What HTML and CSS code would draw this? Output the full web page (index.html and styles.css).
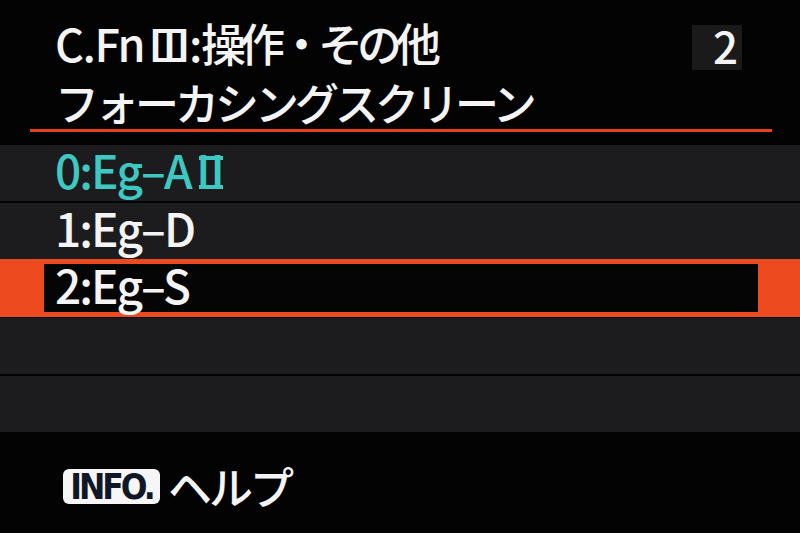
FILE: index.html
```html
<!DOCTYPE html>
<html lang="ja">
<head>
<meta charset="utf-8">
<link rel="stylesheet" href="styles.css">
</head>
<body>
<div class="screen">
  <header class="head">
    <div class="head-top">
      <h1 class="title"><span class="lat">C.Fn</span><span class="roman r3">Ⅲ</span><span class="lat colon">:</span>操作・その他</h1>
      <span class="page">2</span>
    </div>
    <div class="subtitle">フォーカシングスクリーン</div>
  </header>
  <div class="rule"></div>
  <ul class="list">
    <li class="row current"><span class="label">0:Eg–A<span class="roman r2">Ⅱ</span></span></li>
    <li class="row"><span class="label">1:Eg–D</span></li>
    <li class="row selected"><div class="sel-inner"><span class="label">2:Eg–S</span></div></li>
    <li class="row"></li>
    <li class="row"></li>
  </ul>
  <footer class="foot">
    <span class="badge">INFO.</span>
    <span class="help">ヘルプ</span>
  </footer>
</div>
</body>
</html>
```

FILE: styles.css
```css
* { box-sizing: border-box; }
html, body {
  margin: 0;
  padding: 0;
  background: #030303;
}
.screen {
  width: 800px;
  height: 533px;
  overflow: hidden;
  background: #030303;
  color: #f4f4f4;
  font-family: "Noto Sans CJK JP", "Noto Sans", sans-serif;
}
.head {
  padding: 16px 58px 0 55px;
}
.head-top {
  display: flex;
  justify-content: space-between;
  align-items: flex-start;
  height: 54px;
}
.title {
  margin: 0;
  font-size: 45px;
  font-weight: 500;
  line-height: 54px;
  letter-spacing: -6px;
  white-space: nowrap;
}
.title .lat { letter-spacing: -1.5px; }
.roman {
  position: relative;
  letter-spacing: 0;
}
.roman::before,
.roman::after {
  content: "";
  position: absolute;
  height: 0.09em;
  background: currentColor;
}
.roman::before { top: 0.43em; }
.roman::after { top: 1.07em; }
.r3 { margin: 0 -3px 0 3px; }
.r3::before, .r3::after { left: 0.2em; right: 0.2em; }
.r2 { margin-left: -3px; }
.r2::before, .r2::after { left: 0.24em; right: 0.24em; }
.page {
  margin-top: 9px;
  width: 50px;
  height: 45px;
  background: #1a1a1a;
  text-align: right;
  padding-right: 4px;
  font-size: 44px;
  font-weight: 500;
  line-height: 40px;
}
.subtitle {
  margin: 7px 0 2px;
  font-size: 44px;
  font-weight: 500;
  line-height: 50px;
  letter-spacing: -4px;
  white-space: nowrap;
}
.rule {
  margin-left: 30px;
  width: 742px;
  height: 3px;
  background: #e2401e;
}
.list {
  list-style: none;
  margin: 13px 0 0;
  padding: 0;
  display: flex;
  flex-direction: column;
  gap: 2px;
}
.row {
  height: 56px;
  background: #1c1c1e;
  display: flex;
  align-items: center;
  padding-left: 55px;
  font-size: 46px;
  font-weight: 500;
  letter-spacing: -2px;
}
.row.current { color: #3fc8c2; }
.row.selected {
  height: 58px;
  margin: -2px 0 -1px;
  padding: 5px 42px 5px 44px;
  background: #ee4a1f;
}
.sel-inner {
  flex: 1;
  height: 100%;
  background: #050505;
  display: flex;
  align-items: center;
  padding-left: 11px;
}
.label {
  line-height: 1;
  padding-bottom: 8px;
  white-space: nowrap;
}
.foot {
  display: flex;
  align-items: center;
  gap: 8px;
  padding-left: 63px;
  margin-top: 32px;
}
.badge {
  width: 97px;
  height: 35px;
  background: #f6f6f6;
  color: #101828;
  border-radius: 6px;
  font-family: "DejaVu Sans Condensed", "Liberation Sans Narrow", "Noto Sans", sans-serif;
  font-weight: 700;
  font-size: 35px;
  line-height: 36px;
  text-align: center;
  letter-spacing: -3px;
  white-space: nowrap;
}
.help {
  font-size: 44px;
  font-weight: 500;
  line-height: 44px;
  letter-spacing: -3px;
}
```
